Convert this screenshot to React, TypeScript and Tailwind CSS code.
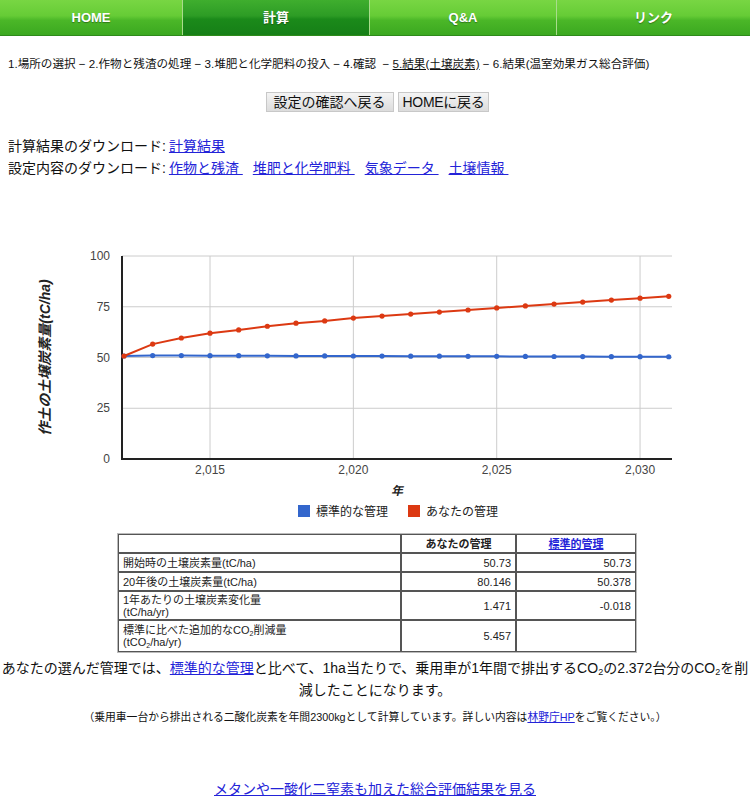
import React from 'react'

const years = Array.from({ length: 20 }, (_, i) => 2012 + i)
const yours = [50.73, 56.6, 59.6, 62, 63.6, 65.4, 66.9, 68, 69.4, 70.4, 71.4, 72.4, 73.4, 74.4, 75.4, 76.3, 77.3, 78.3, 79.2, 80.146]
const standard = [50.73, 50.95, 50.95, 50.92, 50.88, 50.84, 50.8, 50.77, 50.74, 50.7, 50.67, 50.63, 50.6, 50.56, 50.52, 50.49, 50.46, 50.43, 50.4, 50.378]

const px = (year: number) => 124 + (year - 2012) * 28.67
const py = (v: number) => 228 - v * 2.03

const tabs = [
  { label: 'HOME', w: 'w-[183px]', active: false },
  { label: '計算', w: 'w-[187px]', active: true },
  { label: 'Q&A', w: 'w-[187px]', active: false },
  { label: 'リンク', w: 'flex-1', active: false },
]

function Chart() {
  const line = (data: number[]) => data.map((v, i) => `${px(years[i])},${py(v)}`).join(' ')
  return (
    <svg width="750" height="290" className="block">
      {/* gridlines */}
      {[0, 25, 50, 75, 100].map((v) => (
        <g key={v}>
          <line x1={122} x2={672} y1={py(v)} y2={py(v)} stroke="#cccccc" strokeWidth="1" />
          <text x={110} y={py(v) + 4} textAnchor="end" fontSize="12" fill="#444">
            {v}
          </text>
        </g>
      ))}
      {[2015, 2020, 2025, 2030].map((y) => (
        <g key={y}>
          <line x1={px(y)} x2={px(y)} y1={py(100)} y2={py(0)} stroke="#cccccc" strokeWidth="1" />
          <text x={px(y)} y={243} textAnchor="middle" fontSize="12" fill="#444">
            {y.toLocaleString('en-US')}
          </text>
        </g>
      ))}
      {/* axes */}
      <line x1={122} x2={122} y1={py(100)} y2={py(0) + 1} stroke="#222" strokeWidth="2" />
      <line x1={121} x2={672} y1={py(0)} y2={py(0)} stroke="#222" strokeWidth="2" />

      {/* series */}
      <polyline points={line(standard)} fill="none" stroke="#3366cc" strokeWidth="2" />
      {standard.map((v, i) => (
        <circle key={`s${i}`} cx={px(years[i])} cy={py(v)} r="2.6" fill="#3366cc" />
      ))}
      <polyline points={line(yours)} fill="none" stroke="#dc3912" strokeWidth="2" />
      {yours.map((v, i) => (
        <circle key={`y${i}`} cx={px(years[i])} cy={py(v)} r="2.6" fill="#dc3912" />
      ))}

      {/* titles */}
      <text x={397} y={264} textAnchor="middle" fontSize="12" fontStyle="italic" fontWeight="bold" fill="#222">
        年
      </text>
      <text
        x={0}
        y={0}
        transform={`translate(50 ${py(50)}) rotate(-90)`}
        textAnchor="middle"
        fontSize="14"
        fontStyle="italic"
        fontWeight="bold"
        fill="#222"
      >
        作土の土壌炭素量(tC/ha)
      </text>

      {/* legend */}
      <rect x={298} y={274} width={12} height={12} fill="#3366cc" />
      <text x={316} y={284.5} fontSize="12" fill="#222">
        標準的な管理
      </text>
      <rect x={408} y={274} width={12} height={12} fill="#dc3912" />
      <text x={426} y={284.5} fontSize="12" fill="#222">
        あなたの管理
      </text>
    </svg>
  )
}

const cell = 'border border-[#555] px-[4px] leading-[12px] align-middle'
const link = 'text-[#2323d8] underline'

export default function App() {
  return (
    <div className="w-[750px] bg-white text-[#111] font-['Liberation_Sans','Noto_Sans_CJK_JP',sans-serif]">
      {/* ナビゲーション */}
      <div className="flex h-[36px] border-b border-[#2e8a1a]">
        {tabs.map((t) => (
          <div
            key={t.label}
            className={`${t.w} flex items-center justify-center border-r border-[#a9dc8c] last:border-r-0 text-[13px] font-bold text-white [text-shadow:0_1px_1px_rgba(0,0,0,0.35)] ${
              t.active
                ? 'bg-[linear-gradient(to_bottom,#3fae2e_0%,#2d9c25_45%,#1b8a1a_55%,#167f17_100%)]'
                : 'bg-[linear-gradient(to_bottom,#78d643_0%,#66cc36_45%,#4bb728_58%,#3ba820_100%)]'
            }`}
          >
            {t.label}
          </div>
        ))}
      </div>

      {/* 手順 */}
      <div className="mt-[20px] px-[8px] text-[11.6px] leading-[16px] whitespace-nowrap">
        1.場所の選択 − 2.作物と残渣の処理 − 3.堆肥と化学肥料の投入 − 4.確認 &nbsp;−{' '}
        <span className="underline">5.結果(土壌炭素)</span> − 6.結果(温室効果ガス総合評価)
      </div>

      {/* ボタン */}
      <div className="mt-[20px] flex justify-center gap-[4px] pl-[5px]">
        <button className="h-[20px] px-[7px] text-[14px] leading-[18px] border border-[#c8c8c8] bg-[linear-gradient(to_bottom,#f4f4f4,#dcdcdc)]">
          設定の確認へ戻る
        </button>
        <button className="h-[20px] px-[4px] text-[14px] leading-[18px] border border-[#c8c8c8] bg-[linear-gradient(to_bottom,#f4f4f4,#dcdcdc)] tracking-[-0.3px]">
          HOMEに戻る
        </button>
      </div>

      {/* ダウンロード */}
      <div className="mt-[23px] px-[8px] text-[14px] leading-[22px]">
        <div>
          計算結果のダウンロード:<a className={`${link} ml-[3px]`}>計算結果</a>
        </div>
        <div className="flex">
          <span>設定内容のダウンロード:</span>
          <a className={`${link} ml-[3px] mr-[10px]`}>作物と残渣&nbsp;</a>
          <a className={`${link} mr-[10px]`}>堆肥と化学肥料&nbsp;</a>
          <a className={`${link} mr-[10px]`}>気象データ&nbsp;</a>
          <a className={link}>土壌情報&nbsp;</a>
        </div>
      </div>

      {/* グラフ */}
      <div className="mt-[52px]">
        <Chart />
      </div>

      {/* 表 */}
      <table className="mt-[12px] ml-[117px] w-[520px] border border-[#bbb] border-separate border-spacing-0 text-[11px] text-[#222]">
        <tbody>
          <tr className="h-[19px]">
            <td className={`${cell} w-[283px]`}></td>
            <td className={`${cell} w-[115px] text-center font-bold`}>あなたの管理</td>
            <td className={`${cell} text-center font-bold`}>
              <a className={link}>標準的管理</a>
            </td>
          </tr>
          <tr className="h-[19px]">
            <td className={cell}>開始時の土壌炭素量(tC/ha)</td>
            <td className={`${cell} text-right`}>50.73</td>
            <td className={`${cell} text-right`}>50.73</td>
          </tr>
          <tr className="h-[19px]">
            <td className={cell}>20年後の土壌炭素量(tC/ha)</td>
            <td className={`${cell} text-right`}>80.146</td>
            <td className={`${cell} text-right`}>50.378</td>
          </tr>
          <tr className="h-[29px]">
            <td className={cell}>
              1年あたりの土壌炭素変化量
              <br />
              (tC/ha/yr)
            </td>
            <td className={`${cell} text-right`}>1.471</td>
            <td className={`${cell} text-right`}>-0.018</td>
          </tr>
          <tr className="h-[32px]">
            <td className={cell}>
              標準に比べた追加的なCO<sub className="text-[7px]">2</sub>削減量
              <br />
              (tCO<sub className="text-[7px]">2</sub>/ha/yr)
            </td>
            <td className={`${cell} text-right`}>5.457</td>
            <td className={cell}></td>
          </tr>
        </tbody>
      </table>

      {/* 結果の説明 */}
      <div className="mt-[4px] text-center text-[14px] leading-[22px]">
        <div className="whitespace-nowrap">
          あなたの選んだ管理では、<a className={link}>標準的な管理</a>
          と比べて、1ha当たりで、乗用車が1年間で排出するCO<sub className="text-[9px]">2</sub>の2.372台分のCO
          <sub className="text-[9px]">2</sub>を削
        </div>
        <div>減したことになります。</div>
      </div>

      <div className="mt-[9px] text-center text-[10.8px] leading-[14px]">
        （乗用車一台から排出される二酸化炭素を年間2300kgとして計算しています。詳しい内容は
        <a className={link}>林野庁HP</a>をご覧ください。）
      </div>

      <div className="mt-[55px] pb-[12px] text-center text-[14px] leading-[20px]">
        <a className={link}>メタンや一酸化二窒素も加えた総合評価結果を見る</a>
      </div>
    </div>
  )
}
